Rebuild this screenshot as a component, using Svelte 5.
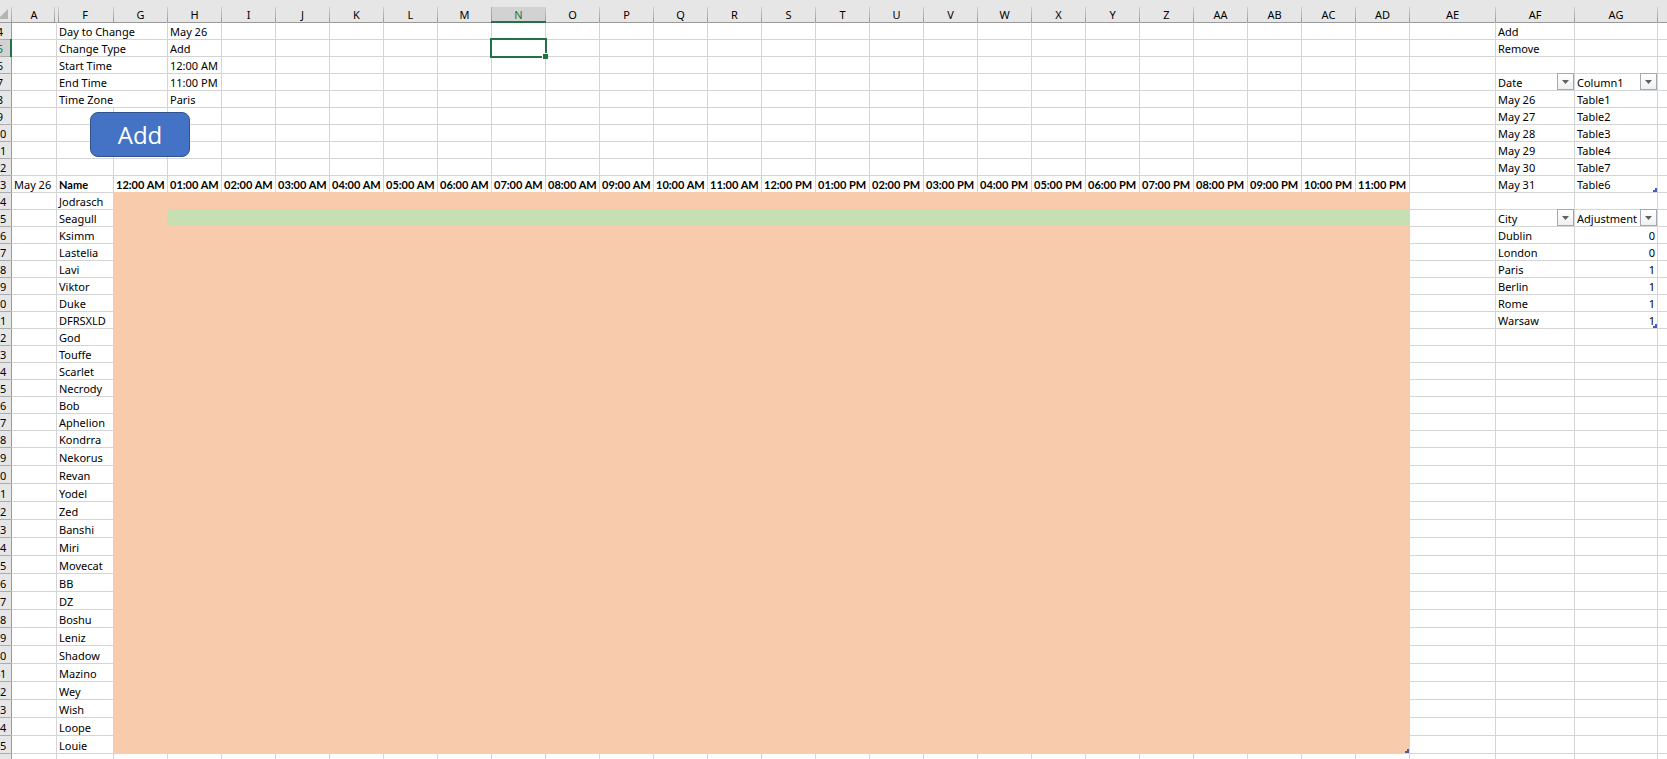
<script>
  const letters = ['G', 'H', 'I', 'J', 'K', 'L', 'M', 'N', 'O', 'P', 'Q', 'R', 'S', 'T', 'U', 'V', 'W', 'X', 'Y', 'Z', 'AA', 'AB', 'AC', 'AD']
  const columns = ['A', 'F', ...letters, 'AE', 'AF', 'AG', 'AH']

  const names = [
    'Jodrasch', 'Seagull', 'Ksimm', 'Lastelia', 'Lavi', 'Viktor', 'Duke', 'DFRSXLD',
    'God', 'Touffe', 'Scarlet', 'Necrody', 'Bob', 'Aphelion', 'Kondrra', 'Nekorus',
    'Revan', 'Yodel', 'Zed', 'Banshi', 'Miri', 'Movecat', 'BB', 'DZ', 'Boshu', 'Leniz',
    'Shadow', 'Mazino', 'Wey', 'Wish', 'Loope', 'Louie'
  ]

  const firstRow = 4
  const lastRow = 46
  const tableTop = 14
  const tableEnd = tableTop + names.length - 1

  const cells = {
    F4: 'Day to Change', H4: 'May 26',
    F5: 'Change Type', H5: 'Add',
    F6: 'Start Time', H6: '12:00 AM',
    F7: 'End Time', H7: '11:00 PM',
    F8: 'Time Zone', H8: 'Paris',
    A13: 'May 26', F13: 'Name',
    AF4: 'Add', AF5: 'Remove',
    AF7: 'Date', AG7: 'Column1',
    AF8: 'May 26', AG8: 'Table1',
    AF9: 'May 27', AG9: 'Table2',
    AF10: 'May 28', AG10: 'Table3',
    AF11: 'May 29', AG11: 'Table4',
    AF12: 'May 30', AG12: 'Table7',
    AF13: 'May 31', AG13: 'Table6',
    AF15: 'City', AG15: 'Adjustment',
    AF16: 'Dublin', AG16: '0',
    AF17: 'London', AG17: '0',
    AF18: 'Paris', AG18: '1',
    AF19: 'Berlin', AG19: '1',
    AF20: 'Rome', AG20: '1',
    AF21: 'Warsaw', AG21: '1'
  }

  names.forEach((name, i) => {
    cells['F' + (tableTop + i)] = name
  })

  letters.forEach((letter, i) => {
    const hour = String(i % 12 || 12).padStart(2, '0')
    cells[letter + 13] = `${hour}:00 ${i < 12 ? 'AM' : 'PM'}`
  })

  const filters = ['AF7', 'AG7', 'AF15', 'AG15']
  const corners = ['AG13', 'AG21', 'AD45']

  const rows = []
  for (let n = firstRow; n <= lastRow; n++) rows.push(n)

  let selected = $state('N5')
  let selectedRow = $derived(Number(selected.replace(/\D/g, '')))
  let selectedColumn = $derived(selected.replace(/\d/g, ''))

  function isMerged(row) {
    return row >= 4 && row <= 8
  }

  function columnsOf(row) {
    return isMerged(row) ? columns.filter(c => c !== 'G') : columns
  }

  function fill(col, row) {
    if (row < tableTop || row > tableEnd) return ''
    if (!letters.includes(col)) return ''
    return row === 15 && col !== 'G' ? 'free' : 'busy'
  }

  // the line on the right of the schedule and under it takes the fill's colour
  function edge(col, row) {
    if (col === 'AE' && fill('AD', row)) return fill('AD', row) + '-left'
    if (row === tableEnd + 1 && letters.includes(col)) return 'busy-top'
    return ''
  }
</script>

<main class="window">
  <table class="sheet">
    <colgroup>
      <col class="w-head" />
      {#each columns as col}
        <col class={letters.includes(col) ? 'w-hour' : 'w-' + col.toLowerCase()} />
      {/each}
    </colgroup>
    <thead>
      <tr>
        <th class="corner"><svg width="10" height="10" viewBox="0 0 10 10"><path d="M10 0V10H0Z" fill="#b4b4b4" /></svg></th>
        {#each columns as col}
          <th scope="col" class="col-head col-{col.toLowerCase()}" class:active={col === selectedColumn}>{col === 'AH' ? '' : col}</th>
        {/each}
      </tr>
    </thead>
    <tbody>
      {#each rows as row}
        <tr class:tall={row > 28}>
          <th scope="row" class="row-head" class:active={row === selectedRow}>{row === lastRow ? '' : row}</th>
          {#each columnsOf(row) as col}
            {@const id = col + row}
            <td
              class="{fill(col, row)} {edge(col, row)}"
              class:first={col === 'A'}
              class:bold={row === 13 && (col === 'F' || letters.includes(col))}
              class:number={col === 'AG' && row > 15}
              colspan={col === 'F' && isMerged(row) ? 2 : 1}
              onclick={() => (selected = id)}
            >
              {cells[id] ?? ''}
              {#if filters.includes(id)}
                <button class="filter" aria-label="Filter {cells[id]}">
                  <svg width="7" height="4" viewBox="0 0 7 4"><path d="M0 0H7L3.5 4Z" fill="#606060" /></svg>
                </button>
              {/if}
              {#if corners.includes(id)}
                <svg class="resize" width="4" height="4" viewBox="0 0 4 4"><path d="M2 0H4V4H0V2H2Z" fill="#4a5bb5" /></svg>
              {/if}
              {#if id === selected}
                <span class="selection"></span>
              {/if}
              {#if id === 'F9'}
                <button class="add">Add</button>
              {/if}
            </td>
          {/each}
        </tr>
      {/each}
    </tbody>
  </table>
</main>

<style>
  :global(body) {
    margin: 0;
    background: #fff;
  }

  .window {
    height: 100vh;
    overflow: hidden;
    font-family: "Noto Sans", "Open Sans", sans-serif;
    font-size: 11px;
    line-height: 14px;
    color: #000;
  }

  /* scrolled a little to the right, so the row numbers are cut */
  .sheet {
    width: calc(100% + 11px);
    margin-left: -11px;
    table-layout: fixed;
    border-collapse: separate;
    border-spacing: 0;
  }

  .w-head { width: 22px; }
  .w-a { width: 45px; }
  .w-f { width: 57px; }
  .w-hour { width: 54px; }
  .w-ae { width: 86px; }
  .w-af { width: 79px; }
  .w-ag { width: 83px; }

  th, td {
    box-sizing: border-box;
    height: 17px;
    padding: 0;
    white-space: nowrap;
    vertical-align: bottom;
  }

  .tall th, .tall td {
    height: 18px;
  }

  th {
    position: relative;
    background-color: #e6e6e6;
    font-weight: 400;
    text-align: center;
  }

  .corner, .col-head {
    height: 22px;
  }

  .corner {
    text-align: right;
    line-height: 0;
    padding: 0 3px 3px 0;
  }

  .col-head {
    padding-left: 1px;
    background-image: linear-gradient(#cfcfcf, #999);
    background-repeat: no-repeat;
    background-size: 1px 15px;
    background-position: left bottom;
  }

  /* B to E are hidden between these two */
  .col-a {
    background-image: linear-gradient(#cfcfcf, #999), linear-gradient(#cfcfcf, #999);
    background-position: left bottom, 43px bottom;
  }

  .col-f {
    background-position: 2px bottom;
  }

  .col-head.active {
    background-image: linear-gradient(#b5b5b5, #999), linear-gradient(#d2d2d2, #d2d2d2);
    background-size: 1px 15px, 100% 15px;
    color: #217346;
  }

  .col-head.active::after {
    content: "";
    position: absolute;
    z-index: 1;
    left: 0;
    right: -1px;
    bottom: -1px;
    height: 2px;
    background: #217346;
  }

  .row-head {
    border-top: 1px solid #ababab;
  }

  .row-head.active {
    background-color: #d2d2d2;
    color: #217346;
  }

  .row-head.active::after {
    content: "";
    position: absolute;
    z-index: 1;
    top: -1px;
    bottom: -1px;
    right: -1px;
    width: 2px;
    background: #217346;
  }

  td {
    position: relative;
    padding-left: 2px;
    border-top: 1px solid #d4d4d4;
    border-left: 1px solid #d4d4d4;
  }

  td.first {
    border-left-color: #999;
  }

  tbody tr:first-child th, tbody tr:first-child td {
    border-top-color: #999;
  }

  .bold {
    font-family: Lato, "Open Sans", sans-serif;
    font-weight: 700;
  }

  .number {
    padding-right: 2px;
    text-align: right;
  }

  td.busy {
    background: #f8cbad;
    border-color: #f8cbad;
  }

  td.free {
    background: #c6e0b4;
    border-color: #c6e0b4;
  }

  td.busy-left { border-left-color: #f8cbad; }
  td.free-left { border-left-color: #c6e0b4; }
  td.busy-top { border-top-color: #f8cbad; }

  button {
    font-family: inherit;
    cursor: pointer;
  }

  .filter {
    position: absolute;
    top: -1px;
    right: 0;
    display: flex;
    align-items: center;
    justify-content: center;
    width: 17px;
    height: 17px;
    padding: 0;
    border: 1px solid #a3a9b1;
    background: linear-gradient(#fff, #eef0f3);
  }

  .resize {
    position: absolute;
    right: 0;
    bottom: 0;
  }

  .selection {
    position: absolute;
    z-index: 1;
    top: -2px;
    left: -2px;
    right: -2px;
    bottom: -2px;
    border: 2px solid #217346;
  }

  .selection::after {
    content: "";
    position: absolute;
    right: -3px;
    bottom: -3px;
    width: 5px;
    height: 5px;
    border: 1px solid #fff;
    border-width: 1px 0 0 1px;
    background: #217346;
  }

  .add {
    position: absolute;
    z-index: 2;
    top: 4px;
    left: 33px;
    width: 100px;
    height: 45px;
    padding: 0;
    border: 1px solid #2f528f;
    border-radius: 8px;
    background: #4472c4;
    color: #fff;
    font-family: "Open Sans", "Noto Sans", sans-serif;
    font-size: 24px;
  }
</style>
